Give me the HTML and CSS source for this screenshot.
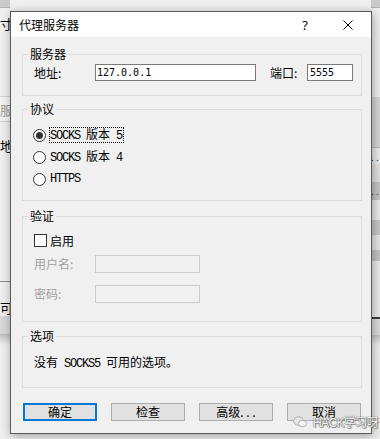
FILE: index.html
```
<!DOCTYPE html>
<html lang="zh-CN">
<head>
    <meta charset="UTF-8">
    <meta name="viewport" content="width=device-width, initial-scale=1.0">
    <title>代理服务器</title>
    <link rel="stylesheet" href="styles.css">
</head>
<body>

<!-- window behind the dialog, only the edges show -->
<div class="backdrop">
    <div class="strip strip-left">
        <div class="band lb-top"></div>
        <div class="band lb-1"><span class="bgtext">寸门</span></div>
        <div class="band lb-2"><span class="bgtext dim">服务</span></div>
        <div class="band lb-3"><span class="bgtext">地址</span></div>
        <div class="band lb-4"><span class="bgtext">可!</span></div>
        <div class="band lb-5"></div>
        <div class="band shade"></div>
        <div class="band rest"></div>
    </div>
    <div class="middle"></div>
    <div class="strip strip-right">
        <div class="band rb-top"></div>
        <div class="band rb-1"></div>
        <div class="band rb-2"></div>
        <div class="band rb-3"><span class="dots">. .</span></div>
        <div class="band rb-4"></div>
        <div class="band rb-5"><span class="dots">. .</span></div>
        <div class="band rb-6"></div>
        <div class="band rb-7"></div>
        <div class="band rb-8"></div>
        <div class="band rb-9"></div>
        <div class="band rb-10"></div>
        <div class="band rb-11"></div>
        <div class="band shade"></div>
        <div class="band rest"></div>
    </div>
</div>

<div class="dialog">
    <div class="titlebar">
        <span class="title">代理服务器</span>
        <span class="help">?</span>
        <svg class="close" viewBox="0 0 10 10"><path d="M0.5 0.5 L9.5 9.5 M9.5 0.5 L0.5 9.5" stroke="#000" stroke-width="1" fill="none"/></svg>
    </div>

    <div class="content">
        <fieldset class="group g-server">
            <legend>服务器</legend>
            <div class="gbody row">
                <span class="lbl">地址:</span>
                <input class="field f-host" type="text" value="127.0.0.1">
                <span class="lbl lbl-port">端口:</span>
                <input class="field f-port" type="text" value="5555">
            </div>
        </fieldset>

        <fieldset class="group g-proto">
            <legend>协议</legend>
            <div class="gbody">
                <div class="opt"><span class="radio on"></span><span class="mono focus">SOCKS <span class="cj">版本</span> 5</span></div>
                <div class="opt"><span class="radio"></span><span class="mono">SOCKS <span class="cj">版本</span> 4</span></div>
                <div class="opt"><span class="radio"></span><span class="mono">HTTPS</span></div>
            </div>
        </fieldset>

        <fieldset class="group g-auth">
            <legend>验证</legend>
            <div class="gbody">
                <div class="check-row"><span class="checkbox"></span><span>启用</span></div>
                <div class="row auth-row">
                    <span class="lbl off">用户名:</span>
                    <input class="field f-auth" type="text" disabled>
                </div>
                <div class="row auth-row second">
                    <span class="lbl off">密码:</span>
                    <input class="field f-auth" type="password" disabled>
                </div>
            </div>
        </fieldset>

        <fieldset class="group g-opts">
            <legend>选项</legend>
            <div class="gbody">
                <div class="note">没有<span class="mono"> SOCKS5 </span>可用的选项。</div>
            </div>
        </fieldset>

        <div class="buttons">
            <button class="btn default">确定</button>
            <button class="btn">检查</button>
            <button class="btn">高级. . .</button>
            <button class="btn">取消</button>
        </div>
    </div>
</div>

<div class="watermark">
    <svg class="wm-icon" viewBox="0 0 14 12"><ellipse cx="5.5" cy="5" rx="5" ry="4.2" fill="#e4e4e4" stroke="#999" stroke-width="0.7"/><ellipse cx="9.5" cy="7.5" rx="4" ry="3.3" fill="#f4f4f4" stroke="#999" stroke-width="0.7"/></svg>
    <span>HACK学习呀</span>
</div>

</body>
</html>
```

FILE: styles.css
```
body {
    margin: 0;
    width: 380px;
    height: 439px;
    overflow: hidden;
    position: relative;
    background: #f0f0f0;
    font-family: "Noto Sans CJK SC", "Noto Sans", sans-serif;
    font-size: 12px;
    color: #000;
}

/* backdrop window */
.backdrop {
    display: flex;
    height: 439px;
}
.strip {
    display: flex;
    flex-direction: column;
}
.strip-left {
    width: 10px;
}
.strip-right {
    width: 9px;
    overflow: hidden;
}
.middle {
    flex: 1;
}
.band {
    flex-shrink: 0;
    background: #f0f0f0;
    white-space: nowrap;
    font-size: 13px;
    line-height: 14px;
}
.bgtext {
    display: block;
}
.bgtext.dim {
    color: #9a9a9a;
}
.lb-top, .rb-top {
    height: 7px;
    background: #cbcbcb;
    border-bottom: 1px solid #b4b4b4;
}
.lb-1 {
    height: 88px;
}
.lb-1 .bgtext {
    padding-top: 9px;
}
.lb-2 {
    height: 24px;
    border-top: 1px solid #d6d6d6;
    background: #f4f4f4;
}
.lb-2 .bgtext {
    padding-top: 6px;
}
.lb-3 {
    height: 159px;
    border-top: 1px solid #cfcfcf;
}
.lb-3 .bgtext {
    padding-top: 17px;
}
.lb-4 {
    height: 34px;
    border-top: 1px solid #8a8a8a;
}
.lb-4 .bgtext {
    padding-top: 19px;
}
.lb-5 {
    height: 18px;
    background: #d9d9d9;
    border-bottom: 1px solid #bdbdbd;
}
.shade {
    height: 10px;
    background: linear-gradient(#c4c4c4, #f0f0f0);
}
.rest {
    flex: 1;
}
.rb-1 { height: 89px; }
.rb-2 { height: 50px; background: #d6d6d6; border-bottom: 1px solid #b8b8b8; }
.rb-3 { height: 17px; background: #ececec; }
.rb-4 { height: 17px; background: #e2e2e2; }
.rb-5 { height: 18px; background: #c6c6c6; }
.rb-6 { height: 20px; background: #ebebeb; }
.rb-7 { height: 15px; background: #c8c8c8; }
.rb-8 { height: 15px; background: #e6e6e6; }
.rb-9 { height: 11px; background: #c4c4c4; }
.rb-10 { height: 56px; background: #ececec; border-bottom: 2px solid #3a3a3a; }
.rb-11 { height: 16px; background: #dedede; }
.dots {
    display: block;
    font-size: 10px;
    line-height: 10px;
    padding-top: 4px;
    color: #333;
}

/* dialog */
.dialog {
    position: absolute;
    left: 10px;
    top: 11px;
    width: 360px;
    height: 421px;
    border: 1px solid #5a5a5a;
    background: #f0f0f0;
    box-shadow: 1px 2px 10px rgba(0, 0, 0, 0.35);
}
.titlebar {
    height: 25px;
    background: #fff;
    display: flex;
    align-items: center;
}
.title {
    padding-left: 8px;
    font-size: 12px;
}
.help {
    margin-left: auto;
    margin-right: 35px;
    font-family: "Noto Sans", sans-serif;
    font-size: 13px;
}
.close {
    width: 10px;
    height: 10px;
    margin-right: 18px;
}
.content {
    padding: 10px 9px 0 11px;
}

.group {
    margin: 0;
    padding: 0;
    border: 1px solid #dcdcdc;
    min-width: 0;
}
.group legend {
    margin-left: 5px;
    padding: 0 2px;
    font-size: 12px;
    line-height: 14px;
}
.row {
    display: flex;
    align-items: center;
}
.lbl {
    width: 61px;
    flex-shrink: 0;
    line-height: 17px;
}
.lbl-port {
    width: 37px;
    margin-left: 14px;
}
.lbl.off {
    color: #a0a0a0;
}
.field {
    box-sizing: border-box;
    height: 17px;
    margin: 0;
    padding: 0 0 0 1px;
    border: 1px solid #7a7a7a;
    background: #fff;
    font-family: "DejaVu Sans Mono", monospace;
    font-size: 10px;
    color: #000;
    outline: none;
}
.f-host {
    width: 161px;
}
.f-port {
    width: 46px;
    padding-left: 2px;
}
.f-auth {
    width: 105px;
    height: 18px;
    border-color: #cccccc;
    background: #f0f0f0;
}

.g-server .gbody {
    padding: 3px 0 14px 11px;
}

.g-proto {
    margin-top: 6px;
}
.g-proto .gbody {
    padding: 8px 0 10px 10px;
}
.opt {
    height: 22px;
    display: flex;
    align-items: center;
}
.radio {
    box-sizing: border-box;
    width: 13px;
    height: 13px;
    border: 1px solid #333;
    border-radius: 50%;
    background: #fff;
    margin-right: 3px;
    display: flex;
    align-items: center;
    justify-content: center;
    flex-shrink: 0;
}
.radio.on::after {
    content: "";
    width: 7px;
    height: 7px;
    border-radius: 50%;
    background: #333;
}
.mono {
    font-family: "Liberation Mono", "Noto Sans CJK SC", monospace;
    font-size: 12px;
    letter-spacing: -1.2px;
    line-height: 12px;
    white-space: pre;
}
.mono .cj {
    font-family: "Noto Sans CJK SC", sans-serif;
    letter-spacing: 0;
}
.focus {
    padding: 0 1px 0 1px;
    border: 1px dotted #000;
}
.opt .mono {
    padding-left: 1px;
}
.opt .mono.focus {
    padding-left: 0;
}

.g-auth {
    margin-top: 8px;
}
.g-auth .gbody {
    padding: 8px 0 18px 11px;
}
.check-row {
    height: 18px;
    display: flex;
    align-items: center;
}
.checkbox {
    box-sizing: border-box;
    width: 13px;
    height: 13px;
    border: 1px solid #333;
    background: #fff;
    margin-right: 3px;
}
.auth-row {
    margin-top: 6px;
}
.auth-row.second {
    margin-top: 12px;
}
.auth-row .lbl {
    line-height: 18px;
}

.g-opts {
    margin-top: 7px;
}
.g-opts .gbody {
    padding: 11px 0 17px 11px;
}
.note {
    line-height: 16px;
    white-space: pre;
}

.buttons {
    margin-top: 15px;
    padding: 0 1px;
    display: flex;
    justify-content: space-between;
}
.btn {
    box-sizing: border-box;
    width: 74px;
    height: 18px;
    margin: 0;
    padding: 0;
    border: 1px solid #adadad;
    background: #e1e1e1;
    font-family: "Noto Sans CJK SC", sans-serif;
    font-size: 12px;
    line-height: 14px;
    color: #000;
}
.btn.default {
    border: 2px solid #0078d7;
}

.watermark {
    position: absolute;
    left: 293px;
    top: 413px;
    display: flex;
    align-items: center;
    gap: 6px;
    font-family: "Liberation Sans", "Noto Sans CJK SC", sans-serif;
    font-size: 12px;
    letter-spacing: -0.6px;
    color: #f8f8f8;
    text-shadow: 0 0 1px #555, 0 0 1px #555, 1px 1px 1px #888;
}
.wm-icon {
    width: 14px;
    height: 12px;
}
```
